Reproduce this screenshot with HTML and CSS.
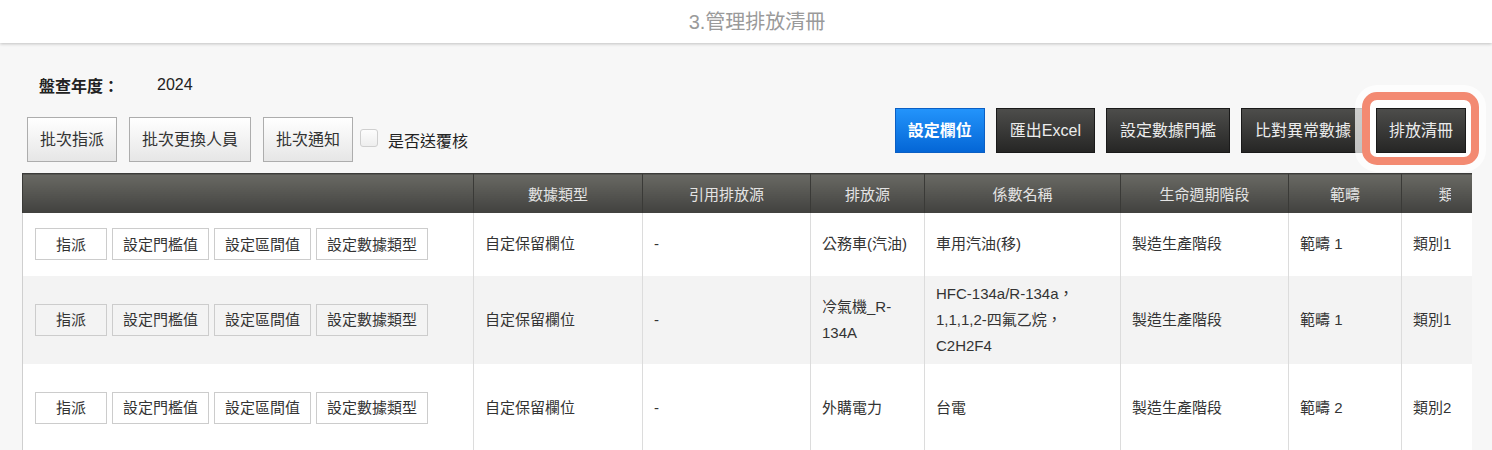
FILE: index.html
```html
<!DOCTYPE html>
<html lang="zh-Hant">
<head>
<meta charset="utf-8">
<title>管理排放清冊</title>
<link rel="stylesheet" href="styles.css">
</head>
<body>
<header class="topbar"><h1 class="title">3.管理排放清冊</h1></header>
<main class="content">
  <div class="year-row"><span class="year-label">盤查年度：</span><span class="year-value">2024</span></div>
  <div class="toolbar">
    <div class="batch">
      <button class="btn btn-light">批次指派</button>
      <button class="btn btn-light">批次更換人員</button>
      <button class="btn btn-light">批次通知</button>
      <label class="review"><input type="checkbox" class="chk"><span>是否送覆核</span></label>
    </div>
    <div class="actions">
      <button class="btn btn-blue">設定欄位</button>
      <button class="btn btn-dark">匯出Excel</button>
      <button class="btn btn-dark">設定數據門檻</button>
      <button class="btn btn-dark">比對異常數據</button>
      <span class="focus-wrap"><span class="focus-ring"></span><button class="btn btn-dark focus-btn">排放清冊</button></span>
    </div>
  </div>
  <div class="table-wrap">
    <table class="grid">
      <colgroup>
        <col class="c-ops"><col class="c-type"><col class="c-ref"><col class="c-src"><col class="c-coef"><col class="c-life"><col class="c-scope"><col class="c-cat">
      </colgroup>
      <thead>
        <tr><th></th><th>數據類型</th><th>引用排放源</th><th>排放源</th><th>係數名稱</th><th>生命週期階段</th><th>範疇</th><th><span class="clip-head">類別</span></th></tr>
      </thead>
      <tbody>
        <tr class="h2">
          <td class="ops"><button class="mini mini-first">指派</button><button class="mini">設定門檻值</button><button class="mini">設定區間值</button><button class="mini">設定數據類型</button></td>
          <td>自定保留欄位</td><td>-</td><td>公務車(汽油)</td><td>車用汽油(移)</td><td>製造生產階段</td><td>範疇 1</td><td>類別1</td>
        </tr>
        <tr class="h3">
          <td class="ops"><button class="mini mini-first">指派</button><button class="mini">設定門檻值</button><button class="mini">設定區間值</button><button class="mini">設定數據類型</button></td>
          <td>自定保留欄位</td><td>-</td><td>冷氣機_R-134A</td><td>HFC-134a/R-134a，1,1,1,2-四氟乙烷，C2H2F4</td><td>製造生產階段</td><td>範疇 1</td><td>類別1</td>
        </tr>
        <tr class="h3">
          <td class="ops"><button class="mini mini-first">指派</button><button class="mini">設定門檻值</button><button class="mini">設定區間值</button><button class="mini">設定數據類型</button></td>
          <td>自定保留欄位</td><td>-</td><td>外購電力</td><td>台電</td><td>製造生產階段</td><td>範疇 2</td><td>類別2</td>
        </tr>
      </tbody>
    </table>
  </div>
</main>
</body>
</html>
```
FILE: styles.css
```css
* { box-sizing: border-box; }
html, body { height: 100%; }
body {
  margin: 0;
  background: #f7f7f7;
  font-family: "Liberation Sans", "Noto Sans CJK TC", sans-serif;
  color: #333;
  overflow: hidden;
}
.topbar {
  position: relative;
  z-index: 2;
  height: 43px;
  background: #fff;
  box-shadow: 0 1px 3px rgba(0, 0, 0, 0.22);
  display: flex;
  align-items: center;
  justify-content: center;
  padding-left: 22px;
}
.title {
  margin: 0;
  font-size: 20px;
  font-weight: normal;
  color: #9a9a9a;
  line-height: 1;
}
.content {
  padding: 0 20px 0 22px;
}
.year-row {
  display: flex;
  align-items: center;
  height: 24px;
  margin-top: 30px;
  padding-left: 17px;
  font-size: 16px;
  color: #222;
}
.year-label { width: 118px; font-weight: bold; }
.toolbar {
  display: flex;
  justify-content: space-between;
  align-items: flex-start;
  margin-top: 11px;
}
.batch {
  display: flex;
  align-items: center;
  margin-top: 9px;
  padding-left: 5px;
  gap: 12px;
}
.btn {
  font: inherit;
  font-size: 16px;
  height: 45px;
  padding: 0 12px;
  line-height: 1;
  cursor: pointer;
  white-space: nowrap;
}
.btn-light {
  background: linear-gradient(#ffffff, #e6e6e6);
  border: 1px solid #adadad;
  color: #333;
}
.review {
  display: flex;
  align-items: center;
  gap: 10px;
  margin-left: -5px;
  font-size: 16px;
  color: #222;
}
.chk {
  appearance: none;
  -webkit-appearance: none;
  margin: 0 0 4px 0;
  width: 18px;
  height: 18px;
  border: 1px solid #cfcfcf;
  border-radius: 3px;
  background: linear-gradient(#fdfdfd, #eeeeee);
}
.actions {
  display: flex;
  gap: 11px;
  padding-right: 6px;
}
.btn-blue {
  background: linear-gradient(#2394fb, #0466d6);
  border: 1px solid #0b5fc4;
  color: #fff;
  font-weight: bold;
}
.btn-dark {
  padding: 0 13px;
  background: linear-gradient(#4d4d4b, #262625);
  border: 1px solid #1a1a1a;
  color: #ececec;
}
.focus-wrap {
  position: relative;
  display: inline-flex;
}
.focus-ring {
  position: absolute;
  top: -16px;
  left: -14px;
  right: -13px;
  bottom: -12px;
  border: 8px solid #f38a72;
  border-radius: 15px;
  background: #fff;
  box-shadow: 0 0 0 7px rgba(255, 255, 255, 0.72);
  z-index: 1;
}
.focus-btn {
  position: relative;
  z-index: 2;
  padding: 0 12px;
}
.table-wrap {
  margin-top: 11px;
  overflow: hidden;
}
.grid {
  border-collapse: collapse;
  table-layout: fixed;
  width: 1491px;
}
.c-ops { width: 451px; }
.c-type { width: 169px; }
.c-ref { width: 168px; }
.c-src { width: 114px; }
.c-coef { width: 196px; }
.c-life { width: 168px; }
.c-scope { width: 113px; }
.c-cat { width: 112px; }
.grid th {
  height: 39px;
  padding: 0;
  background: linear-gradient(#696964, #41413e);
  border-top: 1px solid #3c3c3a;
  border-left: 1px solid #3a3a37;
  color: #e4e4e4;
  font-weight: normal;
  font-size: 15px;
  text-align: center;
  white-space: nowrap;
  overflow: hidden;
}
.clip-head {
  display: inline-block;
  width: 12px;
  overflow: hidden;
  vertical-align: middle;
  margin-left: 2px;
  margin-right: 28px;
}
.grid td {
  border-left: 1px solid #dcdcdc;
  padding: 0 11px;
  font-size: 15px;
  line-height: 26px;
  color: #333;
  vertical-align: middle;
}
.grid tbody tr { background: #fff; }
.grid tbody tr:nth-child(even) { background: #f3f3f3; }
.grid tr.h2 td { height: 63px; }
.grid tr.h3 td { height: 88px; }
.grid td.ops {
  padding-left: 12px;
  white-space: nowrap;
  border-left-color: #cfcfcf;
}
.mini {
  font: inherit;
  font-size: 15px;
  height: 32px;
  padding: 0 10px;
  margin-right: 5px;
  border: 1px solid #cccccc;
  background: transparent;
  color: #333;
  line-height: 1;
  vertical-align: middle;
}
.mini-first { min-width: 72px; }
```
